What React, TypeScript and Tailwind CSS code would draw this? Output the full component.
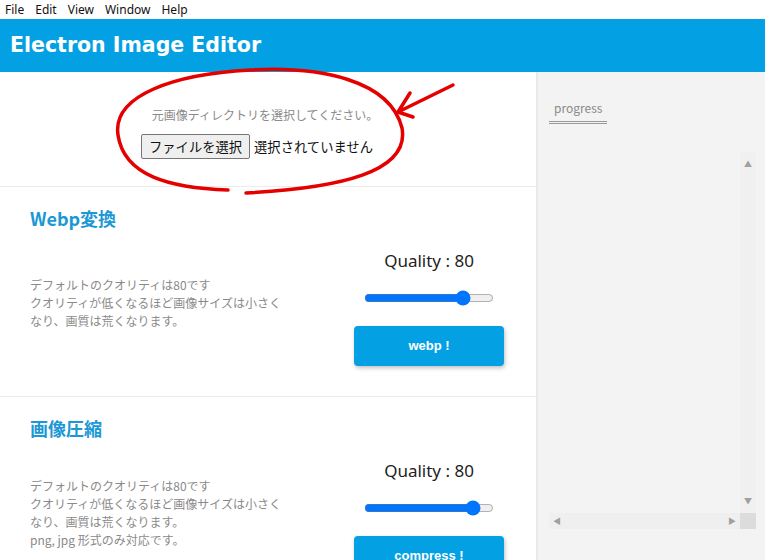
import { useState } from 'react';

const jp = '[font-family:"Noto_Sans_CJK_JP",sans-serif]';

function Section({ title, lines, value, label }: { title: string; lines: string[]; value: number; label: string }) {
  const [q, setQ] = useState(value);
  return (
    <section className="border-t border-[#ebebeb] px-[30px] pt-[20px] h-[210px]">
      <h2 className="text-[18px] leading-[22px] font-bold text-[#1b98d5]">{title}</h2>
      <div className="flex items-center mt-[20px]">
        <div className="w-[300px] pb-[10px] text-[12px] leading-[18px] text-[#8a8a8a]">
          {lines.map((l) => (
            <p key={l}>{l}</p>
          ))}
        </div>
        <div className="flex flex-col items-center w-[150px] ml-[24px]">
          <p className="text-[17px] leading-[22px] mt-[1px] text-[#222] [font-family:'Noto_Sans','Noto_Sans_CJK_JP',sans-serif]">Quality : 80</p>
          <input
            type="range"
            min={0}
            max={100}
            value={q}
            onChange={(e) => setQ(Number(e.target.value))}
            className="w-[130px] mt-[18px] accent-[#0075ff]"
          />
          <button className="mt-[20px] w-[150px] h-[40px] rounded-[4px] bg-[#03a1e4] text-white text-[13px] font-bold shadow-[1px_2px_4px_rgba(0,0,0,0.25)] [font-family:'Liberation_Sans',sans-serif]">
            {label}
          </button>
        </div>
      </div>
    </section>
  );
}

export default function App() {
  const desc = ['デフォルトのクオリティは80です', 'クオリティが低くなるほど画像サイズは小さく', 'なり、画質は荒くなります。'];
  return (
    <div className={`relative w-[765px] h-[560px] overflow-hidden bg-white ${jp}`}>
      <div className="h-[19px] flex items-center gap-[11px] px-[5px] text-[12px] text-[#111] [font-family:'Noto_Sans',sans-serif]">
        <span>File</span>
        <span>Edit</span>
        <span>View</span>
        <span>Window</span>
        <span>Help</span>
      </div>
      <header className="h-[53px] bg-[#03a1e4] flex items-center px-[10px]">
        <h1 className="text-white text-[20.5px] font-bold [font-family:'DejaVu_Sans',sans-serif]">Electron Image Editor</h1>
      </header>
      <div className="flex h-[488px]">
        <main className="w-[536px] overflow-hidden">
          <div className="h-[114px] flex flex-col pt-[35px]">
            <p className="self-center mr-[6px] text-[12px] leading-[16px] text-[#8a8a8a]">元画像ディレクトリを選択してください。</p>
            <div className="flex items-center self-start ml-[141px] mt-[11px] text-[13.3px] text-[#111]">
              <button className="h-[25px] px-[7px] bg-[#efefef] border border-[#767676] rounded-[2px] text-[13.3px]">ファイルを選択</button>
              <span className="ml-[4px]">選択されていません</span>
            </div>
          </div>
          <Section title="Webp変換" lines={desc} value={80} label="webp !" />
          <Section title="画像圧縮" lines={[...desc, 'png, jpg 形式のみ対応です。']} value={89} label="compress !" />
        </main>
        <aside className="flex-1 bg-[#f3f3f3] border-l-2 border-[#e9e9e9] pl-[11px] pr-[9px] pt-[22px]">
          <span className="inline-block px-[5px] pb-[5px] text-[12px] leading-[16px] text-[#8a8a8a] border-b-[3px] border-double border-[#9a9a9a]">progress</span>
          <div className="mt-[28px] h-[377px] flex flex-col">
            <div className="flex flex-1">
              <div className="flex-1" />
              <div className="w-[16px] bg-[#f0f0f0] flex flex-col justify-between items-center py-[6px] text-[8px] text-[#a0a0a0]">
                <span>▲</span>
                <span>▼</span>
              </div>
            </div>
            <div className="flex h-[16px]">
              <div className="flex-1 bg-[#efefef] flex justify-between items-center px-[4px] text-[8px] text-[#a0a0a0]">
                <span>◀</span>
                <span>▶</span>
              </div>
              <div className="w-[16px] bg-[#dcdcdc]" />
            </div>
          </div>
        </aside>
      </div>
      <svg className="absolute left-0 top-0 pointer-events-none" width="765" height="560" fill="none" stroke="#e50000" strokeWidth="3.5" strokeLinecap="round" strokeLinejoin="round">
        <path d="M 228 190 C 170 188, 124 176, 118 135 C 112 95, 175 74, 250 70 C 320 66, 390 80, 402 128 C 410 172, 340 188, 246 193" />
        <path d="M 453 85 L 398 112 M 398 112 L 410 93 M 398 112 L 413 117" />
      </svg>
    </div>
  );
}
